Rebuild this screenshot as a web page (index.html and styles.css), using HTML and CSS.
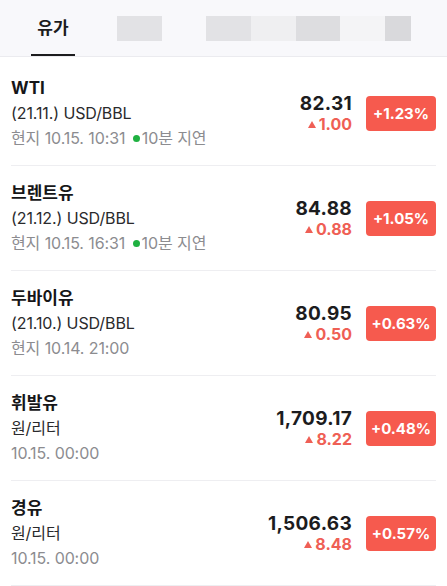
FILE: index.html
```
<!DOCTYPE html>
<html lang="ko">
<head>
<meta charset="utf-8">
<link rel="stylesheet" href="styles.css">
</head>
<body>
<header class="tabs">
  <div class="tab active">유가</div>
  <div class="ph ph1"></div>
  <div class="ph-group">
    <div class="ph pa"></div>
    <div class="ph pb"></div>
    <div class="ph pc"></div>
    <div class="ph pd"></div>
    <div class="ph pe"></div>
  </div>
</header>
<ul class="list">
  <li class="row">
    <div class="info">
      <div class="name">WTI</div>
      <div class="sub">(21.11.) USD/BBL</div>
      <div class="time">현지 10.15. 10:31 <span class="live"><span class="dot"></span>10분 지연</span></div>
    </div>
    <div class="quote">
      <div class="price">82.31</div>
      <div class="change"><span class="tri"></span>1.00</div>
    </div>
    <div class="badge">+1.23%</div>
  </li>
  <li class="row">
    <div class="info">
      <div class="name">브렌트유</div>
      <div class="sub">(21.12.) USD/BBL</div>
      <div class="time">현지 10.15. 16:31 <span class="live"><span class="dot"></span>10분 지연</span></div>
    </div>
    <div class="quote">
      <div class="price">84.88</div>
      <div class="change"><span class="tri"></span>0.88</div>
    </div>
    <div class="badge">+1.05%</div>
  </li>
  <li class="row">
    <div class="info">
      <div class="name">두바이유</div>
      <div class="sub">(21.10.) USD/BBL</div>
      <div class="time">현지 10.14. 21:00</div>
    </div>
    <div class="quote">
      <div class="price">80.95</div>
      <div class="change"><span class="tri"></span>0.50</div>
    </div>
    <div class="badge">+0.63%</div>
  </li>
  <li class="row">
    <div class="info">
      <div class="name">휘발유</div>
      <div class="sub">원/리터</div>
      <div class="time">10.15. 00:00</div>
    </div>
    <div class="quote">
      <div class="price">1,709.17</div>
      <div class="change"><span class="tri"></span>8.22</div>
    </div>
    <div class="badge">+0.48%</div>
  </li>
  <li class="row">
    <div class="info">
      <div class="name">경유</div>
      <div class="sub">원/리터</div>
      <div class="time">10.15. 00:00</div>
    </div>
    <div class="quote">
      <div class="price">1,506.63</div>
      <div class="change"><span class="tri"></span>8.48</div>
    </div>
    <div class="badge">+0.57%</div>
  </li>
</ul>
</body>
</html>
```
FILE: styles.css
```
* { box-sizing: border-box; }
html, body { margin: 0; padding: 0; background: #ffffff; }
body {
  font-family: Inter, "Noto Sans CJK KR", sans-serif;
  color: #1c1c1e;
  width: 447px;
  overflow: hidden;
}
.tabs {
  height: 57px;
  background: #f8f8fb;
  border-bottom: 1px solid #ebebef;
  display: flex;
  align-items: flex-start;
  padding-left: 31px;
}
.tab {
  width: 44px;
  height: 56px;
  text-align: center;
  font-size: 17px;
  font-weight: 600;
  line-height: 20px;
  padding-top: 18px;
  color: #1c1c1e;
  border-bottom: 2px solid #1c1c1e;
  margin-bottom: -1px;
}
.ph { height: 25px; margin-top: 16px; }
.ph1 { width: 45px; margin-left: 42px; background: #e2e2e5; }
.ph-group { display: flex; margin-left: 44px; }
.ph-group .ph { margin-top: 16px; }
.pa { width: 45px; background: #e2e2e5; }
.pb { width: 45px; background: #efeff1; }
.pc { width: 44px; background: #dddde0; }
.pd { width: 45px; background: #f4f4f6; }
.pe { width: 26px; background: #d9d9dc; }

.list { list-style: none; margin: 0; padding: 4px 0 0; }
.row {
  display: flex;
  align-items: center;
  margin: 0 11px 0 11px;
  padding: 15px 0 14px;
  border-bottom: 1px solid #eeeef1;
}
.info { flex: 1; min-width: 0; }
.name {
  font-size: 17px;
  font-weight: 700;
  line-height: 25px;
  color: #161618;
}
.sub {
  font-size: 16px;
  line-height: 25px;
  color: #2a2a2c;
  letter-spacing: -0.1px;
}
.time {
  font-size: 16px;
  line-height: 25px;
  color: #8c8c90;
  letter-spacing: -0.1px;
}
.live { color: #8c8c90; }
.dot {
  display: inline-block;
  width: 7px;
  height: 7px;
  border-radius: 50%;
  background: #1fb141;
  margin-left: 3px;
  margin-right: 2px;
  vertical-align: 2px;
}
.quote {
  text-align: right;
  margin-right: 14px;
  display: flex;
  flex-direction: column;
  gap: 0;
}
.price {
  font-size: 19px;
  font-weight: 700;
  line-height: 22px;
  color: #1c1c1e;
  letter-spacing: 0.3px;
}
.change {
  font-size: 16px;
  font-weight: 700;
  line-height: 19px;
  color: #ef5f55;
}
.tri {
  display: inline-block;
  width: 0;
  height: 0;
  border-left: 4px solid transparent;
  border-right: 4px solid transparent;
  border-bottom: 7px solid #ef5f55;
  margin-right: 3px;
  vertical-align: 2px;
}
.badge {
  width: 70px;
  height: 35px;
  border-radius: 4px;
  background: #f65a4e;
  color: #ffffff;
  font-size: 15px;
  font-weight: 700;
  display: flex;
  align-items: center;
  justify-content: center;
}
```
